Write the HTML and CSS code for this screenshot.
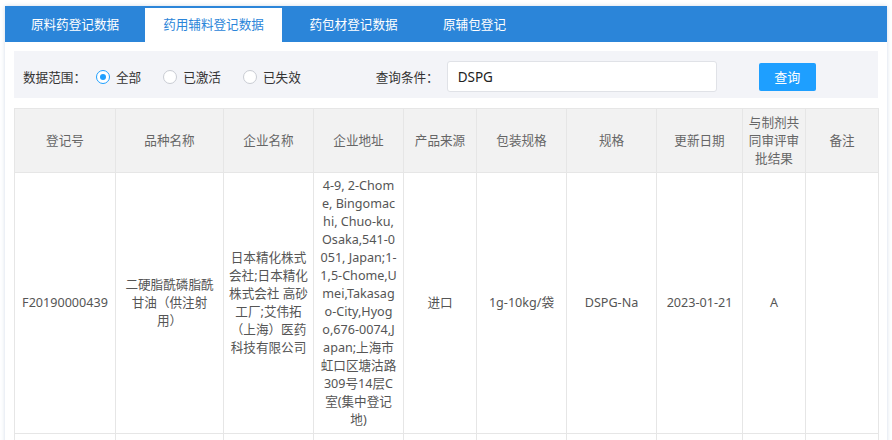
FILE: index.html
```html
<!DOCTYPE html>
<html>
<head>
  <meta charset="UTF-8">
  <title>药用辅料登记数据</title>
  <link rel="stylesheet" href="styles.css">
</head>
<body>
  <div class="page">
    <ul class="tabs">
      <li class="tab tab-1">原料药登记数据</li>
      <li class="tab tab-2 active">药用辅料登记数据</li>
      <li class="tab tab-3">药包材登记数据</li>
      <li class="tab tab-4">原辅包登记</li>
    </ul>

    <div class="content">
      <form class="filter">
        <span class="filter-label">数据范围：</span>
        <label class="radio checked"><span class="dot"></span>全部</label>
        <label class="radio"><span class="dot"></span>已激活</label>
        <label class="radio"><span class="dot"></span>已失效</label>
        <span class="filter-label query-label">查询条件：</span>
        <input class="query" type="text" value="DSPG">
        <button class="search" type="button">查询</button>
      </form>

      <table class="grid">
        <colgroup>
          <col style="width:101px">
          <col style="width:108px">
          <col style="width:90px">
          <col style="width:90px">
          <col style="width:73px">
          <col style="width:90px">
          <col style="width:90px">
          <col style="width:86px">
          <col style="width:63px">
          <col style="width:73px">
        </colgroup>
        <thead>
          <tr>
            <th>登记号</th>
            <th>品种名称</th>
            <th>企业名称</th>
            <th>企业地址</th>
            <th>产品来源</th>
            <th>包装规格</th>
            <th>规格</th>
            <th>更新日期</th>
            <th>与制剂共同审评审批结果</th>
            <th>备注</th>
          </tr>
        </thead>
        <tbody>
          <tr>
            <td>F20190000439</td>
            <td>二硬脂酰磷脂酰甘油（供注射用）</td>
            <td>日本精化株式会社;日本精化株式会社 高砂工厂;艾伟拓（上海）医药科技有限公司</td>
            <td class="addr">4-9, 2-Chome, Bingomachi, Chuo-ku, Osaka,541-0051, Japan;1-1,5-Chome,Umei,Takasago-City,Hyog<br>o,676-0074,J<br>apan;上海市<br>虹口区塘沽路<br>309号14层C<br>室(集中登记<br>地)</td>
            <td>进口</td>
            <td>1g-10kg/袋</td>
            <td>DSPG-Na</td>
            <td>2023-01-21</td>
            <td>A</td>
            <td></td>
          </tr>
          <tr class="empty">
            <td></td><td></td><td></td><td></td><td></td>
            <td></td><td></td><td></td><td></td><td></td>
          </tr>
        </tbody>
      </table>
    </div>
  </div>
</body>
</html>
```

FILE: styles.css
```css
body {
  margin: 0;
  background: #ffffff;
  font-family: "Noto Sans", "Noto Sans CJK SC", sans-serif;
  font-size: 12.6px;
  color: #333;
  text-spacing-trim: space-all;
}
.page {
  margin: 6px 5px 0 5px;
  width: 882px;
  background: #ffffff;
  box-shadow: 0 0 4px rgba(120, 150, 190, 0.35);
}
.tabs {
  display: flex;
  margin: 0;
  padding: 2px 0 0 0;
  list-style: none;
  background: #2b85d9;
  height: 34px;
}
.tab {
  height: 34px;
  line-height: 34px;
  text-align: center;
  color: #ffffff;
  font-size: 12.6px;
}
.tab-1 { width: 140px; }
.tab-2 { width: 137px; }
.tab-3 { width: 143px; }
.tab-4 { width: 99px; }
.tab.active {
  background: #ffffff;
  color: #2b85d9;
}
.content {
  padding: 9px 9px 0 9px;
}
.filter {
  display: flex;
  align-items: center;
  margin: 0 0 10px 0;
  padding: 10px 9px 6px 9px;
  background: #f3f4f8;
  color: #333;
}
.filter-label {
  margin-right: 10px;
}
.radio {
  display: flex;
  align-items: center;
  margin-right: 22px;
}
.radio .dot {
  width: 12px;
  height: 12px;
  border: 1px solid #c9ccd3;
  border-radius: 50%;
  background: #ffffff;
  margin-right: 6px;
  position: relative;
}
.radio.checked .dot {
  border-color: #1e9fff;
}
.radio.checked .dot::after {
  content: "";
  position: absolute;
  left: 3px;
  top: 3px;
  width: 6px;
  height: 6px;
  border-radius: 50%;
  background: #1e9fff;
}
.query-label {
  margin-left: 53px;
  margin-right: 8px;
}
.query {
  width: 270px;
  height: 31px;
  box-sizing: border-box;
  padding: 0 10px;
  border: 1px solid #e0e2e7;
  border-radius: 3px;
  font-family: "Noto Sans", sans-serif;
  font-size: 13.5px;
  color: #222;
}
.search {
  margin-left: 42px;
  width: 57px;
  height: 28px;
  border: none;
  border-radius: 2px;
  background: #1e9fff;
  color: #ffffff;
  font-family: "Noto Sans CJK SC", sans-serif;
  font-size: 13px;
}
.grid {
  width: 864px;
  table-layout: fixed;
  border-collapse: collapse;
}
.grid th,
.grid td {
  border: 1px solid #e6e6e6;
  padding: 4px 5px;
  text-align: center;
  vertical-align: middle;
  line-height: 18px;
  word-break: break-all;
}
.grid th {
  height: 55px;
  background: #f2f2f2;
  color: #666;
  font-weight: normal;
}
.grid td {
  color: #555;
}
.grid .empty td {
  height: 60px;
}
```
